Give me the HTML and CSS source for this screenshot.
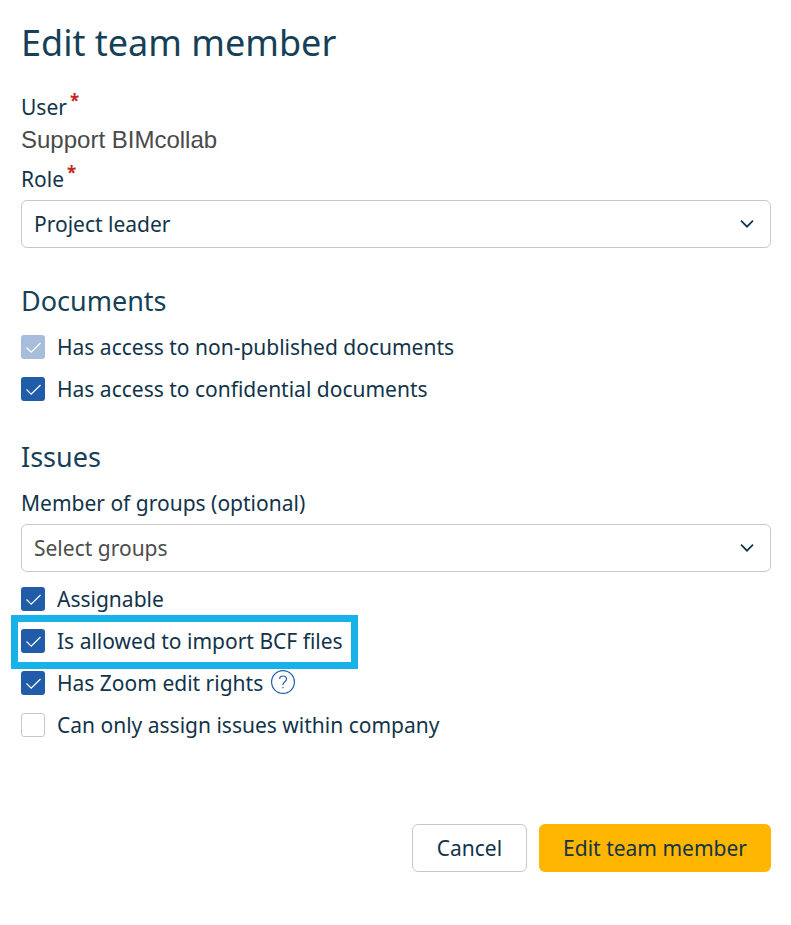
FILE: index.html
```html
<!DOCTYPE html>
<html lang="en">
<head>
<meta charset="utf-8">
<title>Edit team member</title>
<link rel="stylesheet" href="styles.css">
</head>
<body>
<form class="dialog">
  <h1>Edit team member</h1>

  <div class="label">User<span class="required">*</span></div>
  <div class="user-name">Support BIMcollab</div>

  <label class="label" for="role">Role<span class="required">*</span></label>
  <div class="select">
    <select id="role"><option>Project leader</option></select>
    <svg viewBox="0 0 16 16" aria-hidden="true"><path d="M2 4.700 8 10.700 14 4.700"/></svg>
  </div>

  <section>
    <h2>Documents</h2>
    <label class="check"><input type="checkbox" checked disabled><span>Has access to non-published documents</span></label>
    <label class="check"><input type="checkbox" checked><span>Has access to confidential documents</span></label>
  </section>

  <section>
    <h2>Issues</h2>
    <label class="label" for="groups">Member of groups (optional)</label>
    <div class="select placeholder">
      <select id="groups"><option>Select groups</option></select>
      <svg viewBox="0 0 16 16" aria-hidden="true"><path d="M2 4.700 8 10.700 14 4.700"/></svg>
    </div>
    <label class="check"><input type="checkbox" checked><span>Assignable</span></label>
    <label class="check highlighted"><input type="checkbox" checked><span>Is allowed to import BCF files</span></label>
    <div class="check-row">
      <label class="check"><input type="checkbox" checked><span>Has Zoom edit rights</span></label>
      <button type="button" class="help" aria-label="Help">
        <svg viewBox="0 0 24 24" aria-hidden="true">
          <circle cx="12" cy="12" r="11.400"/>
          <path d="M8.500 8.800C8.800 7 10.200 6 12 6c2 0 3.500 1.200 3.500 3.100 0 1.500-.9 2.200-1.900 3-1 .7-1.600 1.300-1.600 2.500v.5M12 17v1.300"/>
        </svg>
      </button>
    </div>
    <label class="check"><input type="checkbox"><span>Can only assign issues within company</span></label>
  </section>

  <footer>
    <button type="button" class="button">Cancel</button>
    <button type="button" class="button primary">Edit team member</button>
  </footer>
</form>
</body>
</html>
```
FILE: styles.css
```css
* {
  box-sizing: border-box;
}

body {
  margin: 0;
  background: #fff;
  color: #12344a;
  font: 21px/30px "Noto Sans", sans-serif;
}

.dialog {
  padding: 16px 20px 52px 21px;
}

h1 {
  margin: 0 0 22px;
  color: #163f58;
  font-size: 36px;
  font-weight: 400;
  line-height: 54px;
}

h2 {
  margin: 0 0 14px;
  color: #163f58;
  font-size: 27px;
  font-weight: 400;
  line-height: 34px;
}

section {
  margin-top: 36px;
}

.label {
  display: flex;
  gap: 3px;
  height: 36px;
}

.required {
  color: #c3261c;
  font-size: 17px;
  font-weight: 700;
  line-height: 18px;
}

.user-name {
  height: 36px;
  color: #4a4a4a;
  font: 24px/24px "Liberation Sans", sans-serif;
}

.select {
  position: relative;
}

.select select {
  display: block;
  width: 100%;
  height: 48px;
  padding: 0 48px 0 12px;
  appearance: none;
  border: 1px solid #c6c8ca;
  border-radius: 6px;
  background: #fff;
  color: inherit;
  font: inherit;
}

.placeholder select {
  color: #4c4c4c;
}

.select svg {
  position: absolute;
  top: 16px;
  right: 16px;
  width: 16px;
  height: 16px;
  fill: none;
  stroke: #12344a;
  stroke-width: 1.7;
  pointer-events: none;
}

.check {
  display: flex;
  align-items: center;
  gap: 12px;
  width: fit-content;
  height: 30px;
  margin-bottom: 12px;
}

.check input {
  flex: none;
  width: 24px;
  height: 24px;
  margin: 0;
  appearance: none;
  border: 1px solid #c6c8ca;
  border-radius: 3px;
  background: #fff;
}

.check input:checked {
  border: 0;
  background: #205ca8 url("data:image/svg+xml,%3Csvg xmlns='http://www.w3.org/2000/svg' viewBox='0 0 24 24'%3E%3Cpath d='M5.500 12.500l4.700 4.600L19.500 8' fill='none' stroke='white' stroke-width='1.2'/%3E%3C/svg%3E") center / 24px;
}

.check input:checked:disabled {
  background-color: #a6bedc;
}

.select + .check {
  margin-top: 12px;
}

.highlighted {
  position: relative;
}

.highlighted::after {
  content: "";
  position: absolute;
  inset: -11px -15px -13px -10px;
  border: 7px solid #18b1e8;
  pointer-events: none;
}

.check-row {
  display: flex;
  gap: 8px;
}

.help {
  width: 24px;
  height: 24px;
  margin-top: 2px;
  padding: 0;
  border: 0;
  background: none;
}

.help svg {
  display: block;
  fill: none;
  stroke: #205ca8;
  stroke-width: 1.2;
}

footer {
  display: flex;
  justify-content: flex-end;
  gap: 12px;
  margin-top: 84px;
}

.button {
  height: 48px;
  padding: 0 24px;
  border: 1px solid #c6c8ca;
  border-radius: 6px;
  background: #fff;
  color: inherit;
  font: inherit;
}

.primary {
  border: 0;
  background: #ffb600;
}
```
